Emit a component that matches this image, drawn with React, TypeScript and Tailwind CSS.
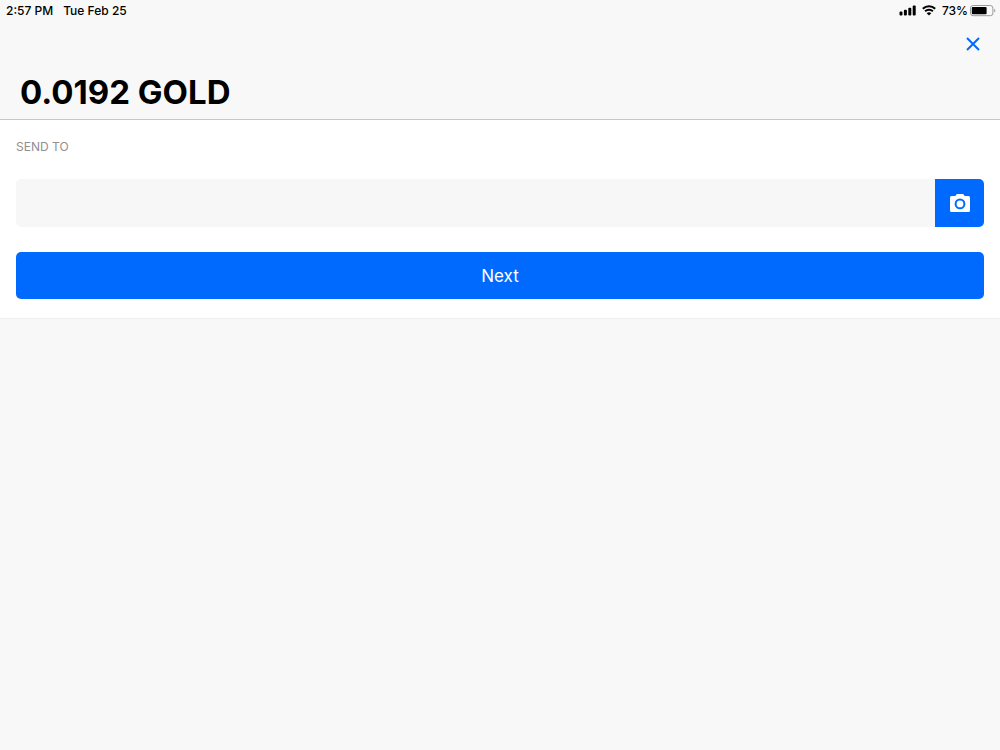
import { useState } from 'react';

function SignalIcon() {
  return (
    <svg width="17" height="12" viewBox="0 0 17 12" fill="#000" aria-hidden="true">
      <rect x="0.5" y="6.4" width="3" height="4.2" rx="1" />
      <rect x="4.9" y="4.8" width="3" height="5.8" rx="1" />
      <rect x="9.3" y="2.8" width="3" height="7.8" rx="1" />
      <rect x="13.7" y="0.6" width="3" height="10" rx="1" />
    </svg>
  );
}

function WifiIcon() {
  return (
    <svg width="14" height="12" viewBox="0 0 14 12" fill="none" stroke="#000" aria-hidden="true">
      <path d="M0.8 3.7a8.9 8.9 0 0 1 12.4 0" strokeWidth="2.1" />
      <path d="M3.1 6.3a5.6 5.6 0 0 1 7.8 0" strokeWidth="1.9" />
      <path d="M7 10.6 4.7 8.3a3.3 3.3 0 0 1 4.6 0Z" fill="#000" stroke="none" />
    </svg>
  );
}

function BatteryIcon() {
  return (
    <svg width="26" height="12" viewBox="0 0 26 12" fill="none" aria-hidden="true">
      <rect x="0.5" y="0.5" width="22.4" height="10.2" rx="2.6" stroke="#9b9b9b" />
      <rect x="1.8" y="2" width="14.8" height="7.2" rx="1" fill="#000" />
      <path d="M24.2 3.8c1.5.5 1.5 3.2 0 3.7Z" fill="#9b9b9b" />
    </svg>
  );
}

function CameraIcon() {
  return (
    <svg width="20" height="18" viewBox="0 0 20 18" aria-hidden="true">
      <path
        d="M1.6 2H5.4L6.2.7Q6.6 0 7.4 0h5.2q.8 0 1.2.7L14.6 2h3.8Q20 2 20 3.6v12.8Q20 18 18.4 18H1.6Q0 18 0 16.4V3.6Q0 2 1.6 2Z"
        fill="#fff"
      />
      <circle cx="10" cy="9.9" r="4.4" fill="none" stroke="#006aff" strokeWidth="2" />
    </svg>
  );
}

function StatusBar() {
  return (
    <div className="flex h-[21px] items-center justify-between pr-1 pl-1.5 text-xs font-medium text-black">
      <div className="flex gap-2.5">
        <span>2:57 PM</span>
        <span>Tue Feb 25</span>
      </div>
      <div className="flex items-center">
        <SignalIcon />
        <span className="mr-1.5 ml-1.5">
          <WifiIcon />
        </span>
        <span className="mr-0.5">73%</span>
        <BatteryIcon />
      </div>
    </div>
  );
}

export default function App() {
  const [address, setAddress] = useState('');

  return (
    <div className="min-h-screen bg-[#f8f8f8] font-['Inter',sans-serif]">
      <header className="border-b border-[#c8c8c8]">
        <StatusBar />
        <div className="flex h-[46px] items-center justify-end px-5">
          <button type="button" aria-label="Close" className="text-[#006aff]">
            <svg width="14" height="14" viewBox="0 0 14 14" fill="none" stroke="currentColor" strokeWidth="2">
              <path d="M1 1l12 12M13 1 1 13" />
            </svg>
          </button>
        </div>
        <h1 className="px-5 pt-1.5 pb-2 text-[33px] leading-[38px] font-bold text-black">0.0192 GOLD</h1>
      </header>

      <form
        className="border-b border-[#eeeeee] bg-white px-4 pt-[18px] pb-[19px]"
        onSubmit={(event) => event.preventDefault()}
      >
        <label htmlFor="address" className="block text-xs leading-[18px] text-[#8e8e93]">
          SEND TO
        </label>
        <div className="mt-[23px] flex h-12">
          <input
            id="address"
            type="text"
            value={address}
            onChange={(event) => setAddress(event.target.value)}
            className="min-w-0 flex-1 rounded-l-[5px] bg-[#f7f7f7] px-4 text-base outline-none"
          />
          <button
            type="button"
            aria-label="Scan code"
            className="flex w-[49px] items-center justify-center rounded-r-[5px] bg-[#006aff]"
          >
            <CameraIcon />
          </button>
        </div>
        <button
          type="submit"
          className="mt-[25px] block h-[47px] w-full rounded-[5px] bg-[#006aff] pt-0.5 text-[17px] text-white"
        >
          Next
        </button>
      </form>
    </div>
  );
}
